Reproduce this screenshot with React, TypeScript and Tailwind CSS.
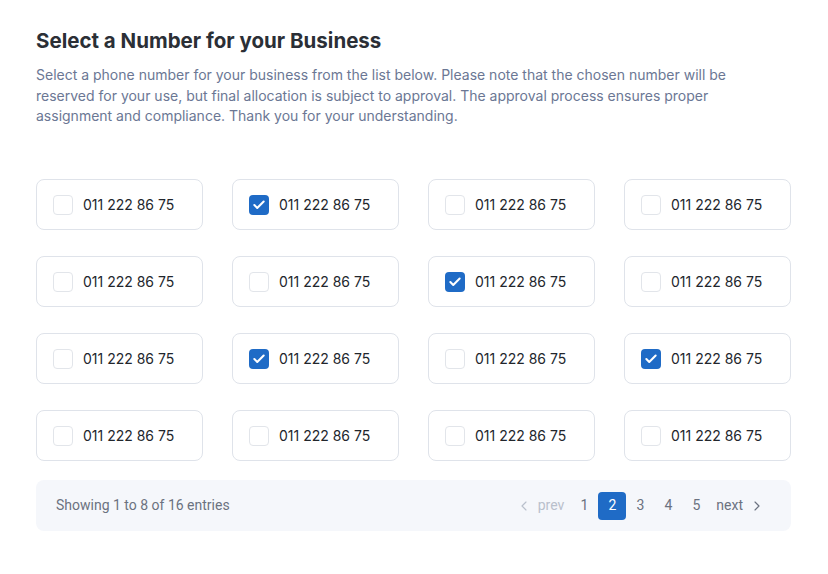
import React from "react";
import { ChevronLeft, ChevronRight, Check } from "lucide-react";

const checkedSet = [1, 6, 9, 11];

const App = () => {
  const numbers = Array.from({ length: 16 }, (_, i) => ({
    id: i,
    value: "011 222 86 75",
    checked: checkedSet.includes(i),
  }));

  return (
    <div className="min-h-screen bg-white font-['Inter',sans-serif]">
      <div className="pl-9 pr-[37px] pt-[28px]">
        <h1 className="text-[20.5px] font-bold leading-[26px] text-[#2b2f36]">
          Select a Number for your Business
        </h1>
        <p className="mt-[11px] text-[14px] leading-[20.5px] text-[#6b7794] max-w-[720px]">
          Select a phone number for your business from the list below. Please note that the chosen number will be
          reserved for your use, but final allocation is subject to approval. The approval process ensures proper
          assignment and compliance. Thank you for your understanding.
        </p>

        <div className="mt-[52px] grid grid-cols-4 gap-x-[29px] gap-y-[26px]">
          {numbers.map((n) => (
            <label
              key={n.id}
              className="flex h-[51px] items-center gap-[10px] rounded-[8px] border border-[#dfe3ea] bg-white pl-[16px] pt-[1px]"
            >
              {n.checked ? (
                <span className="flex h-[20px] w-[20px] items-center justify-center rounded-[4px] bg-[#1f6bc6]">
                  <Check className="h-[14px] w-[14px] text-white" strokeWidth={3.5} />
                </span>
              ) : (
                <span className="h-[20px] w-[20px] rounded-[4px] border border-[#e2e5ea] bg-white" />
              )}
              <span className="text-[14px] text-[#22262c]">{n.value}</span>
            </label>
          ))}
        </div>

        <div className="mt-[19px] flex h-[51px] items-center justify-between rounded-[8px] bg-[#f5f7fb] pl-[20px] pr-[26px] pt-[1px] font-['Roboto',sans-serif]">
          <span className="text-[14px] text-[#6b7280]">Showing 1 to 8 of 16 entries</span>
          <div className="flex items-center text-[14px] text-[#6b7280]">
            <span className="flex items-center gap-[6px] text-[#b9c0cc]">
              <ChevronLeft className="h-[16px] w-[16px]" strokeWidth={1.75} />
              prev
            </span>
            <span className="ml-[6px] flex h-[28px] w-[28px] items-center justify-center">1</span>
            <span className="flex h-[28px] w-[28px] items-center justify-center rounded-[4px] bg-[#1f6bc6] text-white">
              2
            </span>
            <span className="flex h-[28px] w-[28px] items-center justify-center">3</span>
            <span className="flex h-[28px] w-[28px] items-center justify-center">4</span>
            <span className="flex h-[28px] w-[28px] items-center justify-center">5</span>
            <span className="ml-[6px] flex items-center gap-[6px]">
              next
              <ChevronRight className="h-[16px] w-[16px]" strokeWidth={1.75} />
            </span>
          </div>
        </div>
      </div>
    </div>
  );
};

export default App;
